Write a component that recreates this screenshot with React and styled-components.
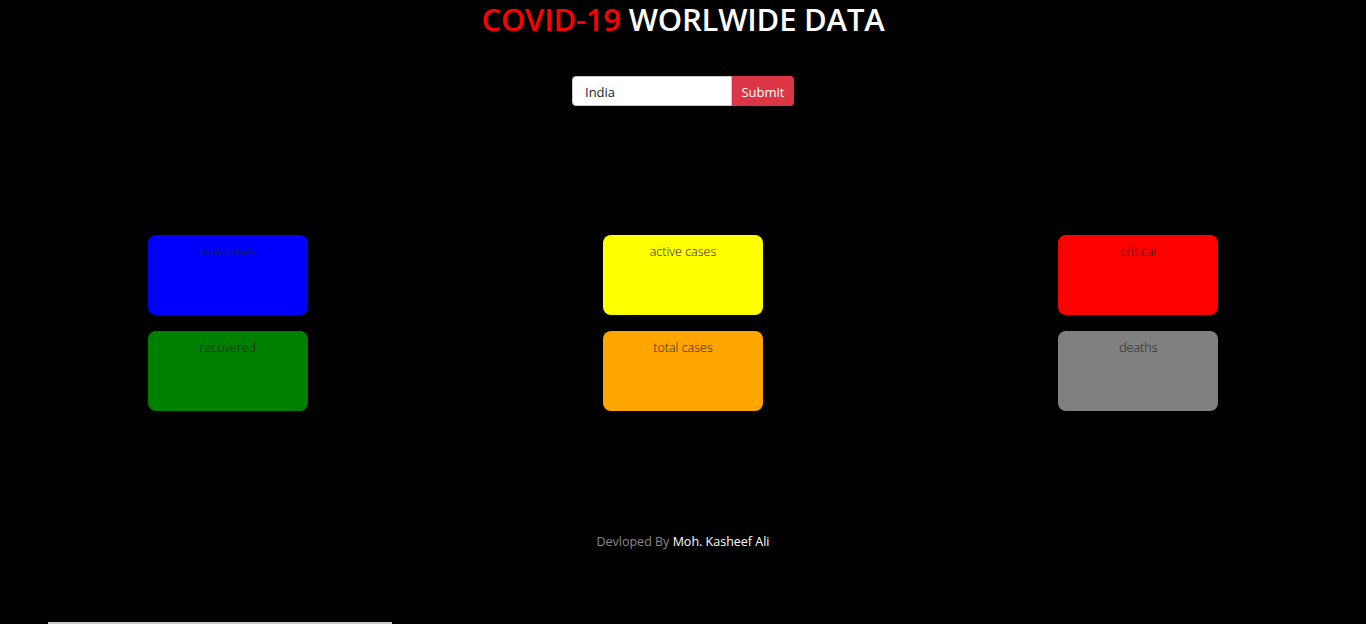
import React, { useState } from 'react';
import styled, { createGlobalStyle } from 'styled-components';

const GlobalStyle = createGlobalStyle`
  html, body {
    margin: 0;
    padding: 0;
    background: #000;
  }
  body {
    font-family: "Open Sans", "Noto Sans", sans-serif;
  }
`;

const Page = styled.div`
  display: flex;
  flex-direction: column;
  align-items: center;
  min-height: 624px;
  background: #000;
`;

const Title = styled.h1`
  margin: 0;
  font-size: 31px;
  font-weight: 600;
  line-height: 38px;
  color: #fff;
  letter-spacing: -0.2px;
`;

const Red = styled.span`
  color: #f00;
`;

const Form = styled.form`
  display: flex;
  margin-top: 38px;
`;

const Input = styled.input`
  width: 160px;
  height: 30px;
  box-sizing: border-box;
  border: 1px solid #ccc;
  border-radius: 4px 0 0 4px;
  padding: 2px 12px 0;
  font-family: inherit;
  font-size: 13px;
  color: #222;
  outline: none;
`;

const SubmitButton = styled.button`
  width: 62px;
  height: 30px;
  border: none;
  border-radius: 0 4px 4px 0;
  background: #dc3545;
  color: #fff;
  font-family: inherit;
  font-size: 13px;
  padding-top: 2px;
  cursor: pointer;
`;

const Grid = styled.div`
  display: grid;
  grid-template-columns: repeat(3, 1fr);
  row-gap: 16px;
  width: 100%;
  margin-top: 129px;
  justify-items: center;
`;

const Card = styled.div`
  width: 160px;
  height: 80px;
  box-sizing: border-box;
  border-radius: 8px;
  background: ${(p) => p.bg};
  padding-top: 8px;
  text-align: center;
  font-size: 12.5px;
  font-weight: 300;
  color: #222;
`;

const Footer = styled.footer`
  margin-top: 122px;
  font-size: 12.5px;
  color: #888;
`;

const Author = styled.span`
  color: #fff;
`;

const BottomLine = styled.div`
  align-self: flex-start;
  margin-top: auto;
  margin-left: 48px;
  width: 344px;
  height: 2px;
  background: #c8c8c8;
`;

const cards = [
  { label: 'new cases', bg: '#0000ff' },
  { label: 'active cases', bg: '#ffff00' },
  { label: 'critical', bg: '#ff0000' },
  { label: 'recovered', bg: '#008000' },
  { label: 'total cases', bg: '#ffa500' },
  { label: 'deaths', bg: '#808080' },
];

const App = () => {
  const [country, setCountry] = useState('India');

  return (
    <>
      <GlobalStyle />
      <Page>
        <Title>
          <Red>COVID-19</Red> WORLWIDE DATA
        </Title>
        <Form onSubmit={(e) => e.preventDefault()}>
          <Input value={country} onChange={(e) => setCountry(e.target.value)} />
          <SubmitButton type="submit">Submit</SubmitButton>
        </Form>
        <Grid>
          {cards.map((c) => (
            <Card key={c.label} bg={c.bg}>{c.label}</Card>
          ))}
        </Grid>
        <Footer>
          Devloped By <Author>Moh. Kasheef Ali</Author>
        </Footer>
        <BottomLine />
      </Page>
    </>
  );
};

export default App;
